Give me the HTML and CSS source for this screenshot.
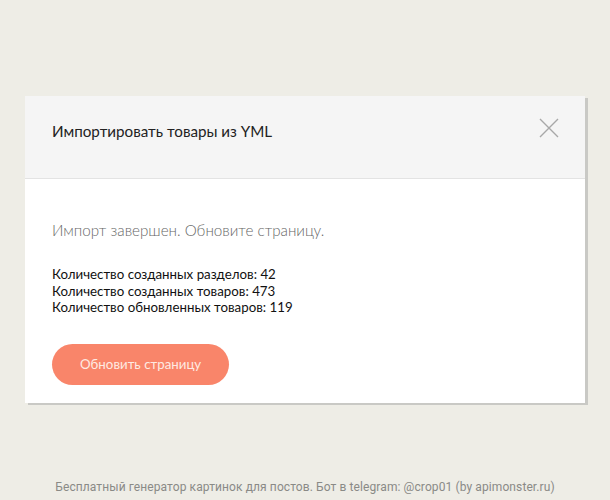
FILE: index.html
```html
<!DOCTYPE html>
<html lang="ru">
<head>
  <meta charset="UTF-8">
  <meta name="viewport" content="width=device-width, initial-scale=1.0">
  <title>Импорт товаров</title>
  <link rel="stylesheet" href="styles.css">
</head>
<body>
  <!-- Modal -->
  <div class="modal">
    <div class="modal-header">
      <h2>Импортировать товары из YML</h2>
      <button class="close" aria-label="Закрыть">
        <svg width="20" height="20" viewBox="0 0 20 20">
          <path d="M1 1 L19 19 M19 1 L1 19" stroke="#a8a8a8" stroke-width="1.4" fill="none"/>
        </svg>
      </button>
    </div>
    <div class="modal-body">
      <p class="message">Импорт завершен. Обновите страницу.</p>
      <ul class="stats">
        <li>Количество созданных разделов: 42</li>
        <li>Количество созданных товаров: 473</li>
        <li>Количество обновленных товаров: 119</li>
      </ul>
      <a href="#" class="button">Обновить страницу</a>
    </div>
  </div>

  <!-- Footer -->
  <footer>
    <p>Бесплатный генератор картинок для постов. Бот в telegram: @crop01 (by apimonster.ru)</p>
  </footer>
</body>
</html>
```

FILE: styles.css
```css
body {
  margin: 0;
  font-family: Lato, "Open Sans", sans-serif;
  background-color: #eeede6;
  color: #222;
}
.modal {
  width: 560px;
  margin: 96px 0 0 25px;
  background-color: #ffffff;
  box-shadow: 3px 2px 0 #c9c9c5;
}
.modal-header {
  height: 83px;
  box-sizing: border-box;
  padding: 0 26px 0 27px;
  background-color: #f5f5f5;
  border-bottom: 1px solid #e3e3e3;
  display: flex;
  justify-content: space-between;
  align-items: flex-start;
}
.modal-header h2 {
  margin: 26px 0 0;
  font-size: 15.2px;
  line-height: 18px;
  font-weight: 400;
  color: #222;
}
.close {
  border: 0;
  background: none;
  padding: 0;
  width: 20px;
  height: 20px;
  margin-top: 22px;
  cursor: pointer;
}
.modal-body {
  padding: 41px 27px 18px;
}
.message {
  margin: 0;
  font-size: 15.2px;
  line-height: 20px;
  font-weight: 300;
  color: #666;
}
.stats {
  list-style: none;
  margin: 26px 0 28px;
  padding: 0;
  font-size: 13.3px;
  line-height: 16.5px;
  color: #111;
}
.button {
  display: inline-flex;
  align-items: center;
  justify-content: center;
  width: 177px;
  height: 41px;
  border-radius: 9999px;
  background-color: #f9856a;
  color: #feeae2;
  font-size: 13.3px;
  text-decoration: none;
}
footer {
  margin-top: 77px;
  text-align: center;
}
footer p {
  margin: 0;
  font-family: Roboto, sans-serif;
  font-size: 12px;
  line-height: 14px;
  letter-spacing: 0.1px;
  color: #8a8a86;
}
```
